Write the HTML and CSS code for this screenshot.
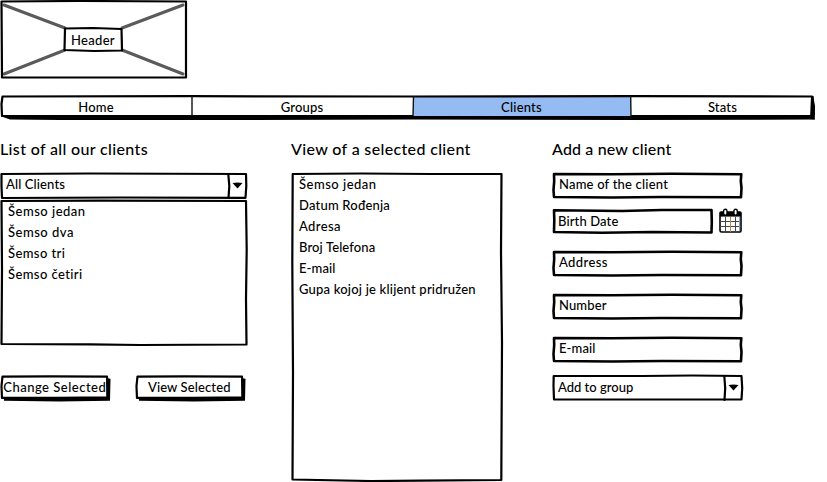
FILE: index.html
```html
<!DOCTYPE html>
<html lang="en">
<head>
<meta charset="utf-8">
<title>Clients</title>
<link rel="stylesheet" href="styles.css">
</head>
<body>
<header class="banner stack">
  <svg class="frame" viewBox="0 0 188 79" aria-hidden="true">
    <path class="cross" d="M4 5L65 28M183 5L122 28M4 74L65 50M183 74L122 50"/>
    <path class="line" d="M1.5 1.5L80 1L186 1.5L186 77.5L90 77.5L2 77.5Z"/>
    <path class="line paper" d="M65 28.5L93 28L121.5 29L122 50.5L94 51L64.5 50Z"/>
  </svg>
  <span class="banner-label">Header</span>
</header>

<nav class="nav stack">
  <svg class="frame" viewBox="0 0 816 26" aria-hidden="true">
    <path class="ink" d="M1 20L815 20L813.5 1L811 1L811 20L815 24.5L630 25L413 24.6L190 25L60 25L10 24.6L1.5 21.5Z"/>
    <path class="ink" d="M811 1L813.2 1L815 11L814.8 24.5L810 24Z"/>
    <path class="active" d="M413 2H631V21H413Z"/>
    <path class="line" d="M2 21L1.5 9L2.5 1.5L190 1.2L413 1.5L631 1.2L812 1.5"/>
    <path class="hair" d="M192 1V21M413.5 1L413 21M630.7 1L631 22"/>
  </svg>
  <div class="tabs">
    <a class="tab">Home</a><a class="tab">Groups</a><a class="tab">Clients</a><a class="tab">Stats</a>
  </div>
</nav>

<main class="columns">
  <section>
    <h2>List of all our clients</h2>
    <div class="select stack wide">
      <svg class="frame" viewBox="0 0 248 27" aria-hidden="true">
        <path class="line" d="M1.5 2L90 1.5L246 2L246.3 14L245.5 25.8L120 25.5L2 26L1.5 14Z"/>
        <path class="line" d="M228.3 2L229.3 14L228.5 26"/>
        <path class="ink" d="M232.5 11Q237.5 9.8 242.5 11L237.5 16.5Z"/>
      </svg>
      <span class="value tight">All Clients</span>
    </div>
    <div class="listbox stack">
      <svg class="frame" viewBox="0 0 248 148" aria-hidden="true">
        <path class="line" d="M1.5 2L100 1.7L246 2L246.7 50L246 100L246.5 145.5L140 146L90 145.3L1.5 145L2 70Z"/>
      </svg>
      <ul>
        <li class="loose">Šemso jedan</li><li class="loose">Šemso dva</li><li>Šemso tri</li><li>Šemso četiri</li>
      </ul>
    </div>
    <div class="actions">
      <div class="button stack">
        <svg class="frame" viewBox="0 0 112 27" aria-hidden="true">
          <path class="ink" d="M109 3L112 3.5L111.5 26L60 26.6L4 26L4 23L108 22Z"/>
          <path class="line paper" d="M2.5 1.5L50 1.2L108.5 1.5L108.8 22.5L60 23L2 23L1.5 11Z"/>
        </svg>
        <span class="loose">Change Selected</span>
      </div>
      <div class="button stack">
        <svg class="frame" viewBox="0 0 112 27" aria-hidden="true">
          <path class="ink" d="M109 3L112 3.5L111.5 26L60 26.6L4 26L4 23L108 22Z"/>
          <path class="line paper" d="M2.5 1.5L50 1.2L108.5 1.5L108.8 22.5L60 23L2 23L1.5 11Z"/>
        </svg>
        <span class="tight">View Selected</span>
      </div>
    </div>
  </section>

  <section>
    <h2>View of a selected client</h2>
    <div class="details stack">
      <svg class="frame" viewBox="0 0 212 310" aria-hidden="true">
        <path class="line" d="M1.7 2L70 1.5L140 2L210.5 2L210 80L211 170L210.3 308L130 308.7L80 309L1.5 307.5L2 200L1.3 90Z"/>
      </svg>
      <ul>
        <li class="loose">Šemso jedan</li><li class="snug">Datum Rođenja</li><li>Adresa</li><li class="tight">Broj Telefona</li><li class="tight">E-mail</li><li class="snug">Gupa kojoj je klijent pridružen</li>
      </ul>
    </div>
  </section>

  <section>
    <h2 class="title-add">Add a new client</h2>
    <div class="field stack">
      <svg class="frame" viewBox="0 0 192 27" aria-hidden="true"><path class="line thick" d="M2 2L60 2.3L120 1.8L189.3 2.2L188.8 9L189.5 16L189 25.3L110 25L60 25.5L2 25L1.5 18L2.2 9Z"/></svg>
      <span class="value snug">Name of the client</span>
    </div>
    <div class="date-row">
      <div class="field short stack">
        <svg class="frame" viewBox="0 0 162 27" aria-hidden="true"><path class="line thick" d="M2 2.3L70 3L110 2L159.5 2L159.8 14L159.5 24.5L100 24L50 24.7L2 24L2.3 12Z"/></svg>
        <span class="value tight">Birth Date</span>
      </div>
      <svg class="calendar" viewBox="0 0 24 26" aria-hidden="true">
        <path class="paper cal-body" d="M1 5Q1 4 2 4H21Q22 4 22 5V22.5Q22 24 21 24H2.5Q1 24 1 22.5Z"/>
        <path class="ink" d="M1 4H22V8.6H1Z"/>
        <path class="grid-lines" d="M1 13.5H22M1 18.5H22M6.5 9V24M16.5 9V24"/>
        <path class="grid-lines warm" d="M11.5 9V24"/>
        <path class="grid-lines cool" d="M20.5 9V23"/>
        <rect class="ring" x="4.6" y="1.3" width="3.4" height="6" rx="1.7"/>
        <rect class="ring" x="14.9" y="1.3" width="3.4" height="6" rx="1.7"/>
      </svg>
    </div>
    <div class="field stack">
      <svg class="frame" viewBox="0 0 192 27" aria-hidden="true"><path class="line thick" d="M2 2L60 2.3L120 1.8L189.3 2.2L188.8 9L189.5 16L189 25.3L110 25L60 25.5L2 25L1.5 18L2.2 9Z"/></svg>
      <span class="value">Address</span>
    </div>
    <div class="field stack">
      <svg class="frame" viewBox="0 0 192 27" aria-hidden="true"><path class="line thick" d="M2 2L60 2.3L120 1.8L189.3 2.2L188.8 9L189.5 16L189 25.3L110 25L60 25.5L2 25L1.5 18L2.2 9Z"/></svg>
      <span class="value tight">Number</span>
    </div>
    <div class="field stack">
      <svg class="frame" viewBox="0 0 192 27" aria-hidden="true"><path class="line thick" d="M2 2L60 2.3L120 1.8L189.3 2.2L188.8 9L189.5 16L189 25.3L110 25L60 25.5L2 25L1.5 18L2.2 9Z"/></svg>
      <span class="value tight">E-mail</span>
    </div>
    <div class="select stack">
      <svg class="frame" viewBox="0 0 192 27" aria-hidden="true">
        <path class="line" d="M1.7 2L90 2L140 1.5L189.5 2L190.2 14L189.5 25.5L80 25.5L2 25.5L1.5 12Z"/>
        <path class="line" d="M172.3 2L173.2 14L172.5 26"/>
        <path class="ink" d="M176.5 11Q181.5 9.8 186.5 11L181.5 16.5Z"/>
      </svg>
      <span class="value add-group">Add to group</span>
    </div>
  </section>
</main>
</body>
</html>
```
FILE: styles.css
```css
* { box-sizing: border-box; }

body {
  margin: 0;
  background: #fff;
  color: #000;
  font-family: Lato, "Liberation Sans", sans-serif;
  font-size: 13px;
  font-weight: 500;
  line-height: 21px;
  letter-spacing: 0.4px;
  white-space: nowrap;
  overflow: hidden;
}

/* Frame and content share one grid cell. */
.stack { display: grid; }
.stack > * { grid-area: 1 / 1; }

svg { display: block; }
.frame { width: 100%; height: 100%; overflow: visible; }
.line { fill: none; stroke: #000; stroke-width: 2.2; stroke-linejoin: round; stroke-linecap: round; }
.thick { stroke-width: 2.6; }
.paper { fill: #fff; }
.ink { fill: #000; }
.hair { fill: none; stroke: #111; stroke-width: 1.4; }
.cross { fill: none; stroke: #5a5a5a; stroke-width: 3; stroke-linecap: round; }
.active { fill: #94bbf2; }

.tight { letter-spacing: 0.12px; }
.snug { letter-spacing: 0.2px; }
.loose { letter-spacing: 0.5px; }

.banner { width: 188px; height: 79px; }
.banner-label { place-self: center; padding: 2px 2px 0 0; letter-spacing: 0.3px; }

.nav { width: 816px; height: 26px; margin-top: 16px; }
.tabs { display: grid; grid-template-columns: 192px 220px 219px 183px; padding-top: 2px; }
.tab { text-align: center; letter-spacing: 0.2px; }

.columns {
  display: grid;
  grid-template-columns: 245px 215px 192px;
  column-gap: 46px;
}
.columns > section { min-width: 0; }

h2 {
  margin: 0;
  height: 51px;
  padding-top: 16px;
  font-size: 16px;
  font-weight: 500;
  line-height: 24px;
  letter-spacing: 0.35px;
}
.title-add { letter-spacing: 0.15px; }

ul { list-style: none; margin: 0; padding: 2px 0 0 8px; }

.select, .field { width: 192px; height: 27px; }
.select.wide { width: 248px; }
.value { padding: 2px 0 0 7px; }
.select .value { padding-left: 6px; }
.select .add-group { padding-top: 3px; letter-spacing: 0; }

.listbox { width: 248px; height: 148px; }
.actions { display: flex; gap: 24px; margin-top: 28px; }
.button { width: 111px; height: 27px; text-align: center; }
.button span { padding: 2px 1px 0 0; }

.details { width: 212px; height: 310px; }

.date-row { display: flex; gap: 5px; height: 27px; margin: 9px 0 15px; }
.field.short { width: 162px; }
.short .value { padding: 3px 0 0 6px; }
.calendar { width: 24px; height: 26px; }
.cal-body { stroke: #000; stroke-width: 1.6; }
.grid-lines { fill: none; stroke: #444; stroke-width: 1; }
.grid-lines.warm { stroke: #b88450; }
.grid-lines.cool { stroke: #7ca5cf; }
.ring { fill: #fff; stroke: #000; stroke-width: 1.4; }

.date-row ~ .field { margin-bottom: 16px; }
.date-row ~ .select { margin-top: -5px; }
```
